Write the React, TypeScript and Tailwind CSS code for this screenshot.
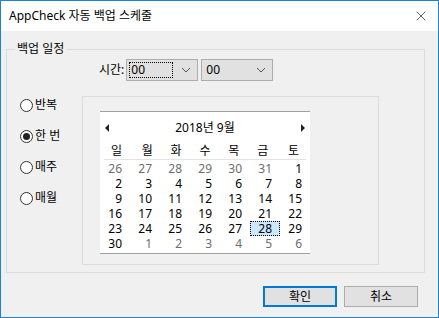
import { X } from 'lucide-react'

const font = { fontFamily: '"Noto Sans", "Noto Sans CJK KR", sans-serif' }

const weekdays = ['일', '월', '화', '수', '목', '금', '토']

const weeks: [number, boolean][][] = [
  [[26, true], [27, true], [28, true], [29, true], [30, true], [31, true], [1, false]],
  [[2, false], [3, false], [4, false], [5, false], [6, false], [7, false], [8, false]],
  [[9, false], [10, false], [11, false], [12, false], [13, false], [14, false], [15, false]],
  [[16, false], [17, false], [18, false], [19, false], [20, false], [21, false], [22, false]],
  [[23, false], [24, false], [25, false], [26, false], [27, false], [28, false], [29, false]],
  [[30, false], [1, true], [2, true], [3, true], [4, true], [5, true], [6, true]],
]

const options = ['반복', '한 번', '매주', '매월']

function Chevron() {
  return (
    <svg width="10" height="6" viewBox="0 0 10 6" className="shrink-0">
      <path d="M1 1 L5 5 L9 1" fill="none" stroke="#555" strokeWidth="1" />
    </svg>
  )
}

function Combo({ focused }: { focused?: boolean }) {
  return (
    <div className="flex h-[22px] w-[72px] items-center border border-[#adadad] bg-[#e1e1e1] pr-[6px]">
      <div
        className={
          focused
            ? 'ml-[2px] mr-[8px] flex h-[16px] flex-1 items-center border border-dotted border-black pl-[1px]'
            : 'ml-[3px] flex h-[16px] flex-1 items-center pl-[1px]'
        }
      >
        00
      </div>
      <Chevron />
    </div>
  )
}

function Radio({ label, checked }: { label: string; checked?: boolean }) {
  return (
    <div className="flex h-[14px] items-center gap-[2px]">
      <span className="flex h-[13px] w-[13px] items-center justify-center rounded-full border border-[#333] bg-white">
        {checked && <span className="h-[7px] w-[7px] rounded-full bg-[#222]" />}
      </span>
      <span>{label}</span>
    </div>
  )
}

export default function App() {
  return (
    <div
      style={font}
      className="flex h-[318px] w-[439px] flex-col border border-[#1883d7] bg-[#f0f0f0] text-[12px] leading-[14px] text-black"
    >
      <div className="flex h-[30px] items-center justify-between bg-white pl-[8px] pr-[9px]">
        <span className="text-[12px]">AppCheck 자동 백업 스케줄</span>
        <X size={16} strokeWidth={1} color="#111" />
      </div>

      <fieldset className="ml-[5px] mr-[13px] mt-[11px] h-[231px] border border-[#dcdcdc]">
        <legend className="ml-[8px] px-[2px] leading-[14px]">백업 일정</legend>

        <div className="ml-[92px] mt-[3px] flex items-center">
          <span className="mr-[2px]">시간:</span>
          <Combo focused />
          <div className="w-[3px]" />
          <Combo />
        </div>

        <div className="mt-[15px] flex">
          <div className="flex w-[75px] flex-col gap-[17px] pl-[13px] pt-[2px]">
            {options.map((o) => (
              <Radio key={o} label={o} checked={o === '한 번'} />
            ))}
          </div>

          <div className="h-[169px] w-[297px] border border-[#dcdcdc] pl-[17px] pt-[14px]">
            <div className="h-[143px] w-[210px] border-y border-[#a0a0a0] bg-white">
              <div className="flex h-[32px] items-center justify-between px-[5px]">
                <svg width="4" height="8" viewBox="0 0 4 8">
                  <path d="M4 0 L0 4 L4 8 Z" fill="#222" />
                </svg>
                <span>2018년 9월</span>
                <svg width="4" height="8" viewBox="0 0 4 8">
                  <path d="M0 0 L4 4 L0 8 Z" fill="#222" />
                </svg>
              </div>
              <div className="mx-[4px] grid h-[16px] grid-cols-7 border-b border-[#e3e3e3]">
                {weekdays.map((d, i) => (
                  <span key={d} className={i === 0 ? 'ml-[-4px] text-center' : i === 6 ? 'mr-[-4px] text-center' : 'text-center'}>
                    {d}
                  </span>
                ))}
              </div>
              <div className="mt-[1px] flex flex-col">
                {weeks.map((w, r) => (
                  <div key={r} className="grid h-[15px] grid-cols-7 leading-[13px]">
                    {w.map(([n, gray], c) => {
                      const sel = r === 4 && c === 5
                      return (
                        <span
                          key={c}
                          className={
                            (sel
                              ? 'border border-dotted border-black bg-[#cce8ff] pr-[7px] '
                              : 'pr-[8px] ') +
                            'flex items-center justify-end ' +
                            (gray ? 'text-[#6d6d6d]' : 'text-black')
                          }
                        >
                          {n}
                        </span>
                      )
                    })}
                  </div>
                ))}
              </div>
            </div>
          </div>
        </div>
      </fieldset>

      <div className="mr-[20px] mt-[13px] flex justify-end gap-[7px]">
        <button className="flex h-[21px] w-[74px] items-center justify-center border-2 border-[#0078d7] bg-[#e1e1e1]">
          확인
        </button>
        <button className="flex h-[21px] w-[74px] items-center justify-center border border-[#adadad] bg-[#e1e1e1]">
          취소
        </button>
      </div>
    </div>
  )
}
